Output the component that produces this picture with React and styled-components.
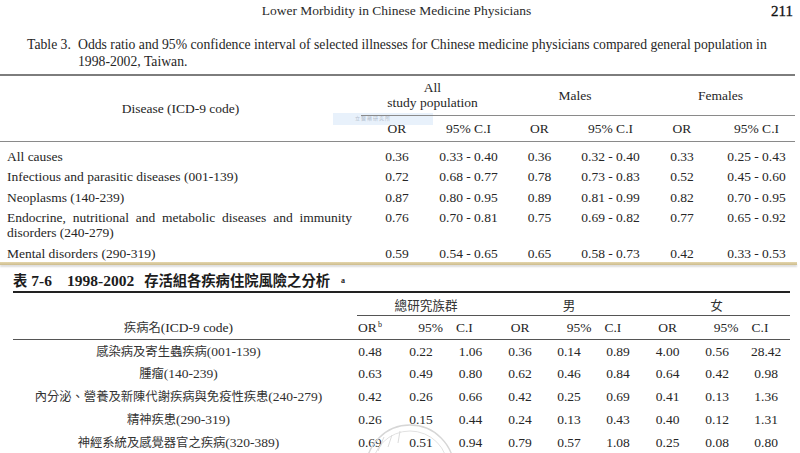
import React from 'react';
import styled, { createGlobalStyle } from 'styled-components';

const GlobalStyle = createGlobalStyle`
  html, body {
    margin: 0;
    padding: 0;
    background: #ffffff;
  }
  body {
    width: 800px;
    height: 453px;
    overflow: hidden;
    font-family: "Liberation Serif", "Times New Roman", "Noto Sans CJK TC", serif;
    color: #262626;
  }
`;

const englishRows = [
  ['All causes', '0.36', '0.33 - 0.40', '0.36', '0.32 - 0.40', '0.33', '0.25 - 0.43'],
  ['Infectious and parasitic diseases (001-139)', '0.72', '0.68 - 0.77', '0.78', '0.73 - 0.83', '0.52', '0.45 - 0.60'],
  ['Neoplasms (140-239)', '0.87', '0.80 - 0.95', '0.89', '0.81 - 0.99', '0.82', '0.70 - 0.95'],
  ['Endocrine, nutritional and metabolic diseases and immunity disorders (240-279)', '0.76', '0.70 - 0.81', '0.75', '0.69 - 0.82', '0.77', '0.65 - 0.92'],
  ['Mental disorders (290-319)', '0.59', '0.54 - 0.65', '0.65', '0.58 - 0.73', '0.42', '0.33 - 0.53'],
];

const chineseRows = [
  ['感染病及寄生蟲疾病', '(001-139)', '0.48', '0.22', '1.06', '0.36', '0.14', '0.89', '4.00', '0.56', '28.42'],
  ['腫瘤', '(140-239)', '0.63', '0.49', '0.80', '0.62', '0.46', '0.84', '0.64', '0.42', '0.98'],
  ['內分泌、營養及新陳代謝疾病與免疫性疾患', '(240-279)', '0.42', '0.26', '0.66', '0.42', '0.25', '0.69', '0.41', '0.13', '1.36'],
  ['精神疾患', '(290-319)', '0.26', '0.15', '0.44', '0.24', '0.13', '0.43', '0.40', '0.12', '1.31'],
  ['神經系統及感覺器官之疾病', '(320-389)', '0.69', '0.51', '0.94', '0.79', '0.57', '1.08', '0.25', '0.08', '0.80'],
];

const topCols = [361, 72, 71, 71, 71, 72, 77];
const bottomCols = [331, 52, 50, 49, 50, 48, 50, 49, 50, 48];

const App = () => {
  return (
    <Page>
      <GlobalStyle />
      <TopSheet>
        <RunningHead>
          <span />
          <HeadTitle>Lower Morbidity in Chinese Medicine Physicians</HeadTitle>
          <PageNo>211</PageNo>
        </RunningHead>
        <Caption>
          <CaptionLabel>Table 3.</CaptionLabel>
          <CaptionText>
            Odds ratio and 95% confidence interval of selected illnesses for Chinese medicine physicians compared general population in
            <br />
            1998-2002, Taiwan.
          </CaptionText>
        </Caption>
        <Stamp>立醫藥研究所</Stamp>
        <TopTable>
          <colgroup>
            {topCols.map((w, i) => (
              <Col key={i} $w={w} />
            ))}
          </colgroup>
          <thead>
            <tr>
              <DiseaseHead rowSpan={2}>Disease (ICD-9 code)</DiseaseHead>
              <GroupHead colSpan={2}>
                All
                <br />
                study population
              </GroupHead>
              <GroupHead colSpan={2}>Males</GroupHead>
              <GroupHead colSpan={2}>Females</GroupHead>
            </tr>
            <tr>
              {['OR', '95% C.I', 'OR', '95% C.I', 'OR', '95% C.I'].map((t, i) => (
                <SubHead key={i}>{t}</SubHead>
              ))}
            </tr>
          </thead>
          <tbody>
            {englishRows.map((row, r) => (
              <tr key={r}>
                <NameCell $first={r === 0}>
                  <Justified>{row[0]}</Justified>
                </NameCell>
                {row.slice(1).map((v, i) => (
                  <ValueCell key={i} $first={r === 0}>
                    {v}
                  </ValueCell>
                ))}
              </tr>
            ))}
          </tbody>
        </TopTable>
      </TopSheet>

      <Divider />

      <BottomSheet>
        <TableTitle>
          <TitleHan>表</TitleHan>
          <TitleNum $gap={4}>7-6</TitleNum>
          <TitleNum $gap={15}>1998-2002</TitleNum>
          <TitleHan $gap={10}>存活組各疾病住院風險之分析</TitleHan>
          <TitleNote>a</TitleNote>
        </TableTitle>
        <BottomTable>
          <colgroup>
            {bottomCols.map((w, i) => (
              <Col key={i} $w={w} />
            ))}
          </colgroup>
          <thead>
            <tr>
              <BlankHead />
              <ZhGroupHead colSpan={3}>
                <GroupRule $trim>總研究族群</GroupRule>
              </ZhGroupHead>
              <ZhGroupHead colSpan={3}>
                <GroupRule>男</GroupRule>
              </ZhGroupHead>
              <ZhGroupHead colSpan={3}>
                <GroupRule>女</GroupRule>
              </ZhGroupHead>
            </tr>
            <tr>
              <ZhSubHead>
                <Han>疾病名</Han>(ICD-9 code)
              </ZhSubHead>
              {[0, 1, 2].map((g) => (
                <React.Fragment key={g}>
                  <ZhSubHead>
                    OR{g === 0 && <sup>b</sup>}
                  </ZhSubHead>
                  <ZhSubHead colSpan={2}>
                    95%<CiGap />C.I
                  </ZhSubHead>
                </React.Fragment>
              ))}
            </tr>
          </thead>
          <tbody>
            {chineseRows.map((row, r) => (
              <tr key={r}>
                <ZhName>
                  <Han>{row[0]}</Han>
                  {row[1]}
                </ZhName>
                {row.slice(2).map((v, i) => (
                  <ZhValue key={i}>{v}</ZhValue>
                ))}
              </tr>
            ))}
          </tbody>
        </BottomTable>
        <Seal width="96" height="48" viewBox="0 0 96 48">
          <circle cx="52" cy="62" r="44" fill="none" stroke="#d6d6d6" strokeWidth="1.4" />
          <circle cx="52" cy="62" r="38" fill="none" stroke="#e2e2e2" strokeWidth="1" />
          <path d="M20 44 L26 30 M30 40 L34 28 M40 36 L42 24" stroke="#dcdcdc" strokeWidth="1" fill="none" />
        </Seal>
      </BottomSheet>
    </Page>
  );
};

export default App;

const Page = styled.div`
  width: 800px;
  height: 453px;
  display: flex;
  flex-direction: column;
  overflow: hidden;
  background: #ffffff;
`;

const TopSheet = styled.section`
  position: relative;
  height: 262px;
  flex-shrink: 0;
  overflow: hidden;
`;

const RunningHead = styled.header`
  display: grid;
  grid-template-columns: 1fr auto 1fr;
  align-items: center;
  height: 22px;
  padding-right: 7px;
`;

const HeadTitle = styled.span`
  font-size: 13.5px;
  color: #2a2a2a;
`;

const PageNo = styled.span`
  justify-self: end;
  font-size: 15px;
  color: #111;
  -webkit-text-stroke: 0.3px #111;
`;

const Caption = styled.div`
  display: flex;
  margin-top: 14px;
  padding-left: 27px;
  font-size: 13.7px;
  line-height: 17px;
  color: #262626;
`;

const CaptionLabel = styled.span`
  width: 51px;
  flex-shrink: 0;
`;

const CaptionText = styled.span`
  white-space: nowrap;
`;

const Stamp = styled.div`
  position: absolute;
  left: 333px;
  top: 113px;
  width: 100px;
  height: 12px;
  padding-left: 22px;
  box-sizing: border-box;
  background: rgba(214, 230, 248, 0.55);
  font-family: "Noto Sans CJK TC", sans-serif;
  font-size: 5px;
  line-height: 10px;
  color: #b2bccb;
  letter-spacing: 1px;
`;

const Col = styled.col`
  width: ${(p) => p.$w}px;
`;

const TopTable = styled.table`
  position: relative;
  margin-top: 4px;
  width: 795px;
  table-layout: fixed;
  border-collapse: separate;
  border-spacing: 0;
  border-top: 2px solid #7d7d7d;
  font-size: 13.5px;
  line-height: 15px;

  td,
  th {
    padding: 0;
    font-weight: normal;
  }
`;

const DiseaseHead = styled.th`
  vertical-align: middle;
  text-align: center;
  border-bottom: 1.5px solid #8a8a8a;
`;

const GroupHead = styled.th`
  height: 30px;
  padding: 4px 0 5px !important;
  vertical-align: middle;
  text-align: center;
  border-bottom: 1.5px solid #8a8a8a;
`;

const SubHead = styled.th`
  padding: 5px 0 4.5px !important;
  text-align: center;
  border-bottom: 1.5px solid #8a8a8a;
`;

const NameCell = styled.td`
  padding: ${(p) => (p.$first ? '7px' : '3.25px')} 9px 2.4px 7px !important;
  vertical-align: top;
`;

const Justified = styled.span`
  display: block;
  text-align: justify;
`;

const ValueCell = styled.td`
  padding: ${(p) => (p.$first ? '7px' : '3.25px')} 0 2.4px !important;
  vertical-align: top;
  text-align: center;
`;

const Divider = styled.div`
  flex-shrink: 0;
  width: 797px;
  height: 3px;
  background: linear-gradient(#e4d6ad, #cdbc8d);
  box-shadow: 0 2px 2px rgba(0, 0, 0, 0.14);
`;

const BottomSheet = styled.section`
  position: relative;
  flex: 1;
  padding: 7px 10px 0 13px;
`;

const TableTitle = styled.h2`
  display: flex;
  align-items: baseline;
  margin: 0;
  height: 18px;
  font-size: 15.5px;
  line-height: 18px;
  font-weight: bold;
  color: #1c1c1c;
  white-space: nowrap;
`;

const TitleHan = styled.span`
  margin-left: ${(p) => p.$gap || 0}px;
  font-family: "Noto Sans CJK TC", sans-serif;
  font-size: 14.3px;
  line-height: 14px;
`;

const TitleNum = styled.span`
  margin-left: ${(p) => p.$gap || 0}px;
`;

const TitleNote = styled.sup`
  margin-left: 11px;
  font-size: 8px;
  line-height: 0;
  position: relative;
  top: -3px;
`;

const BottomTable = styled.table`
  margin-top: 1px;
  width: 777px;
  table-layout: fixed;
  border-collapse: separate;
  border-spacing: 0;
  border-top: 2px solid #222;
  border-bottom: 1.5px solid #333;
  font-size: 13.5px;
  line-height: 16px;

  td,
  th {
    padding: 0;
    font-weight: normal;
  }

  sup {
    font-size: 8px;
    line-height: 0;
    margin-left: 1px;
  }
`;

const BlankHead = styled.th``;

const ZhGroupHead = styled.th`
  text-align: center;
  font-family: "Noto Sans CJK TC", sans-serif;
  font-size: 12.6px;
  line-height: 16px;
  color: #333;
`;

const GroupRule = styled.div`
  margin-left: ${(p) => (p.$trim ? '13px' : '0')};
  padding: 4px 0 2px;
  border-bottom: 1.3px solid #555;
`;

const Han = styled.span`
  font-family: "Noto Sans CJK TC", sans-serif;
  font-size: 12.3px;
  line-height: 10px;
  color: #333;
`;

const ZhSubHead = styled.th`
  padding: 4px 0 3px !important;
  text-align: center;
  border-bottom: 1.3px solid #555;
`;

const CiGap = styled.span`
  display: inline-block;
  width: 13px;
`;

const ZhName = styled.td`
  padding: 3.5px 0 3.25px !important;
  text-align: center;
  color: #303030;
`;

const ZhValue = styled.td`
  padding: 3.5px 0 3.25px !important;
  text-align: center;
`;

const Seal = styled.svg`
  position: absolute;
  left: 358px;
  bottom: 0;
  pointer-events: none;
`;
